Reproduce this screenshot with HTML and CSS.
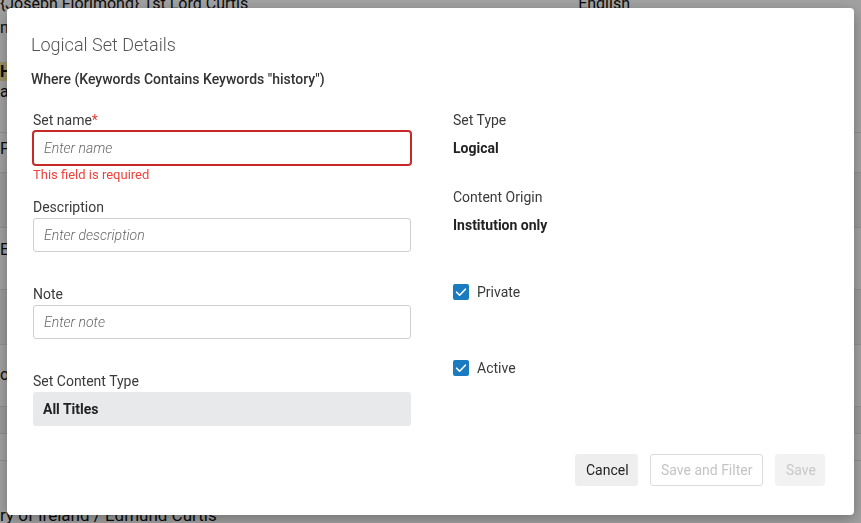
FILE: index.html
```html
<!DOCTYPE html>
<html lang="en">
<head>
<meta charset="utf-8">
<title>Logical Set Details</title>
<link rel="stylesheet" href="styles.css">
</head>
<body>
<div class="page">
  <div class="bg-top"><span>{Joseph Florimond} 1st Lord Curtis</span><span class="bg-lang">English</span></div>
  <div class="bg-row bg-r1">n</div>
  <div class="bg-row bg-r2"><mark>H</mark></div>
  <div class="bg-row bg-r3">at</div>
  <div class="bg-row bg-r4 line">F</div>
  <div class="bg-row bg-r5 band line"></div>
  <div class="bg-row bg-r6 line">E</div>
  <div class="bg-row bg-r7 band line"></div>
  <div class="bg-row bg-r8 line">o</div>
  <div class="bg-row bg-r9 band line"></div>
  <div class="bg-row bg-r10 line"></div>
  <div class="bg-row bg-r11 line"></div>
  <div class="bg-bottom">ry of Ireland / Edmund Curtis</div>
</div>
<div class="overlay"></div>
<div class="modal" role="dialog">
  <h1 class="modal-title">Logical Set Details</h1>
  <p class="query">Where (Keywords Contains Keywords "history")</p>
  <div class="modal-body">
    <div class="col-left">
      <div class="field">
        <label class="label">Set name<span class="req">*</span></label>
        <input class="input error" type="text" placeholder="Enter name">
        <div class="err-msg">This field is required</div>
      </div>
      <div class="field">
        <label class="label">Description</label>
        <input class="input" type="text" placeholder="Enter description">
      </div>
      <div class="field">
        <label class="label">Note</label>
        <input class="input" type="text" placeholder="Enter note">
      </div>
      <div class="field last">
        <label class="label">Set Content Type</label>
        <div class="readonly">All Titles</div>
      </div>
    </div>
    <div class="col-right">
      <div class="info">
        <div class="label">Set Type</div>
        <div class="value">Logical</div>
      </div>
      <div class="info">
        <div class="label">Content Origin</div>
        <div class="value">Institution only</div>
      </div>
      <label class="check first">
        <svg class="cb" width="16" height="16" viewBox="0 0 16 16"><rect width="16" height="16" rx="2" fill="#1b7bc0"/><path d="M3.6 8.2l3 3 5.8-6" fill="none" stroke="#fff" stroke-width="1.6" stroke-linecap="round" stroke-linejoin="round"/></svg>
        <span>Private</span>
      </label>
      <label class="check second">
        <svg class="cb" width="16" height="16" viewBox="0 0 16 16"><rect width="16" height="16" rx="2" fill="#1b7bc0"/><path d="M3.6 8.2l3 3 5.8-6" fill="none" stroke="#fff" stroke-width="1.6" stroke-linecap="round" stroke-linejoin="round"/></svg>
        <span>Active</span>
      </label>
    </div>
  </div>
  <div class="modal-footer">
    <button class="btn btn-cancel">Cancel</button>
    <button class="btn btn-outline" disabled>Save and Filter</button>
    <button class="btn btn-save" disabled>Save</button>
  </div>
</div>
</body>
</html>
```

FILE: styles.css
```css
* { box-sizing: border-box; }
html, body { margin: 0; padding: 0; }
body {
  width: 861px;
  height: 523px;
  overflow: hidden;
  font-family: Roboto, "Liberation Sans", sans-serif;
  background: #fff;
  color: #222;
}

/* background page */
.page { font-size: 16px; color: #111; }
.bg-top { display: flex; margin-top: -6px; height: 20px; line-height: 20px; }
.bg-lang { margin-left: 330px; }
.bg-row { line-height: 20px; }
.bg-r1 { height: 24px; margin-top: 4px; }
.bg-r2 { height: 20px; margin-top: 20px; }
.bg-r2 mark { background: #f2e6a0; color: #111; font-weight: 700; }
.bg-r3 { height: 50px; }
.line { border-top: 1px solid #e4e4e4; }
.bg-r4 { height: 40px; padding-top: 6px; }
.bg-r5 { height: 55px; }
.band { background: #f4f4f4; }
.bg-r6 { height: 62px; padding-top: 12px; }
.bg-r7 { height: 55px; }
.bg-r8 { height: 62px; padding-top: 20px; }
.bg-r9 { height: 27px; }
.bg-r10 { height: 27px; }
.bg-r11 { height: 45px; }
.bg-bottom { font-size: 17px; line-height: 20px; }

.overlay {
  position: fixed;
  inset: 0;
  background: rgba(0, 0, 0, 0.37);
}

/* modal */
.modal {
  position: fixed;
  left: 7px;
  top: 8px;
  width: 847px;
  height: 507px;
  background: #fff;
  border-radius: 4px;
  box-shadow: 0 4px 14px rgba(0, 0, 0, 0.3);
  padding: 25px 29px 29px 24px;
  display: flex;
  flex-direction: column;
}
.modal-title {
  margin: 0;
  font-size: 18px;
  line-height: 24px;
  font-weight: 300;
  color: #555;
}
.query {
  margin: 13px 0 0;
  font-size: 14px;
  line-height: 18px;
  font-weight: 500;
  color: #333;
}
.modal-body {
  flex: 1;
  min-height: 0;
  margin: 23px 0 0 2px;
  display: grid;
  grid-template-columns: 378px 1fr;
  column-gap: 42px;
  align-items: start;
}
.col-left { display: flex; flex-direction: column; }
.field {
  height: 87px;
  display: flex;
  flex-direction: column;
}
.field.last { height: auto; }
.label {
  display: block;
  font-size: 14px;
  line-height: 18px;
  color: #3a3a3a;
  margin-bottom: 2px;
}
.req { color: #e53935; }
.input {
  display: block;
  width: 100%;
  height: 34px;
  border: 1px solid #cfcfcf;
  border-radius: 3px;
  padding: 0 10px;
  font-family: Roboto, "Liberation Sans", sans-serif;
  font-size: 14px;
  color: #222;
  outline: none;
}
.input::placeholder {
  color: #666;
  font-style: italic;
  font-weight: 300;
}
.input.error {
  border-color: #c62828;
  box-shadow: 0 0 0 1px #c62828;
}
.err-msg {
  margin-top: 2px;
  font-size: 13px;
  line-height: 16px;
  color: #f0423c;
}
.readonly {
  height: 34px;
  background: #e7e9ea;
  border-radius: 3px;
  padding: 0 10px;
  font-size: 14px;
  font-weight: 700;
  line-height: 34px;
  color: #222;
}

.col-right { display: flex; flex-direction: column; }
.info { height: 77px; }
.info .label { margin-bottom: 10px; }
.value {
  font-size: 14px;
  line-height: 18px;
  font-weight: 700;
  color: #222;
}
.check {
  display: flex;
  align-items: center;
  gap: 8px;
  height: 18px;
  font-size: 14px;
  color: #3a3a3a;
}
.check.first { margin-top: 18px; }
.check.second { margin-top: 58px; }
.cb { flex: none; }

.modal-footer {
  display: flex;
  justify-content: flex-end;
  gap: 12px;
}
.btn {
  height: 32px;
  border-radius: 3px;
  font-family: Roboto, "Liberation Sans", sans-serif;
  font-size: 14px;
  padding: 0 10px;
  border: 1px solid transparent;
  white-space: nowrap;
}
.btn-cancel { background: #eeeeee; color: #222; width: 63px; }
.btn-outline { background: #fff; border-color: #dcdcdc; color: #c4c4c4; width: 113px; }
.btn-save { background: #f2f2f2; color: #c8c8c8; width: 50px; }
```
